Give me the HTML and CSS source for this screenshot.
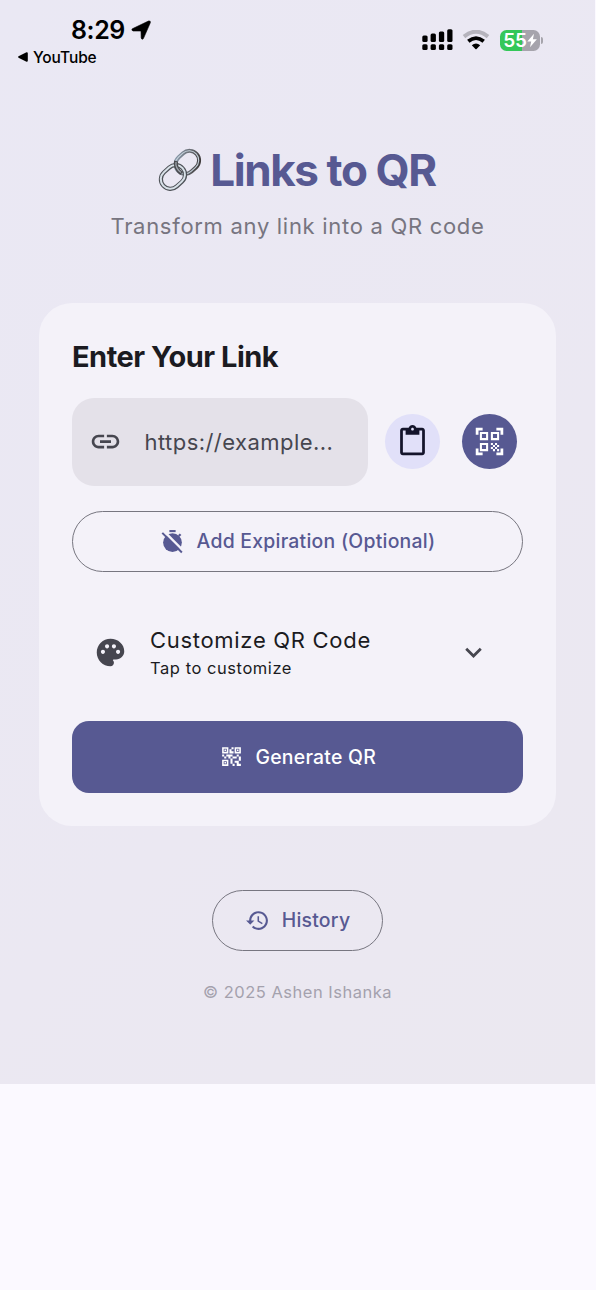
FILE: index.html
```html
<!DOCTYPE html>
<html lang="en">
<head>
<meta charset="UTF-8" />
<title>Links to QR</title>
<link rel="stylesheet" href="styles.css">
</head>
<body>
<div class="screen">

<div class="status">
<div class="status-left">
<div class="clock">8:29
<svg width="20" height="20" viewBox="0 0 20 20"><path d="M1.300 8.800 17.500 1q2.400-.6 1.800 1.800L12.400 18.600q-1.600 1.700-2.200-.6L10 11H2.200q-2.200-.6-.9-2.200z" fill="#000" stroke="#000" stroke-width=".6"/></svg>
</div>
<div class="back"><svg width="10" height="10" viewBox="0 0 10 10"><path d="M.5 4.300 8.500 .2q1.300-.2 1.300 1v7.600q0 1.200-1.300 1L.5 5.700q-.7-.7 0-1.400z" fill="#000"/></svg>YouTube</div>
</div>
<div class="status-right">
<svg class="signal" width="32" height="22" viewBox="0 0 32 22">
<rect x="0.300" y="6.500" width="5.300" height="6.500" rx="1.500"/><rect x="8.600" y="4.500" width="5.300" height="8.500" rx="1.500"/><rect x="16.900" y="2.500" width="5.300" height="10.500" rx="1.500"/><rect x="25.200" y="0.300" width="5.300" height="12.700" rx="1.500"/>
<rect x="0.300" y="15.300" width="5.300" height="5.700" rx="1.500"/><rect x="8.600" y="15.300" width="5.300" height="5.700" rx="1.500"/><rect x="16.900" y="15.300" width="5.300" height="5.700" rx="1.500"/><rect x="25.200" y="15.300" width="5.300" height="5.700" rx="1.500"/>
</svg>
<svg class="wifi" width="28" height="20" viewBox="0 0 28 20">
<path class="line" d="M2 6.600Q14-3.200 26 6.600" stroke="#b5b3bc" stroke-width="4"/>
<path class="line" d="M6.300 11.200Q14 5 21.700 11.200" stroke="#000" stroke-width="3.800"/>
<path d="M9.800 15.200Q14 11.700 18.200 15.200L14.600 19q-.6.500-1.200 0z"/>
</svg>
<div class="battery"><span>55</span><svg width="10" height="15" viewBox="0 0 10 14"><path d="M7 .3.300 8H4.200L3 13.700 9.900 5.800H5.900z" fill="#fff"/></svg></div>
<div class="battery-tip"></div>
</div>
</div>

<div class="hero">
<h1>
<svg class="chain" width="46" height="46" viewBox="0 0 46 46">
<defs><linearGradient id="metal" x1="0" y1="0" x2="1" y2="1"><stop offset="0" stop-color="#8ba0b3"/><stop offset=".45" stop-color="#70757d"/><stop offset="1" stop-color="#35302f"/></linearGradient></defs>
<g class="line" transform="rotate(-42 30 15)"><rect x="17.500" y="6" width="25" height="19" rx="9.500" stroke="url(#metal)" stroke-width="4"/><rect x="17.300" y="5.700" width="25" height="19" rx="9.500" stroke="#c5d0da" stroke-width="1.100"/></g>
<g class="line" transform="rotate(-42 16 30)"><rect x="3" y="20.500" width="26" height="19" rx="9.500" stroke="#4e5258" stroke-width="4.200"/><rect x="3" y="20.300" width="26" height="19" rx="9.500" stroke="#d8e1e8" stroke-width="2"/></g>
<g class="line"><path d="M19 14q-1.500 7 5.500 12.500" stroke="#4a4a4e" stroke-width="4"/><path d="M19 15q-1 6 5 10.500" stroke="#9ba3ab" stroke-width="1.300"/></g>
</svg>
<span>Links to QR</span>
</h1>
<p class="subtitle">Transform any link into a QR code</p>
</div>

<div class="card">
<h2>Enter Your Link</h2>
<div class="link-row">
<div class="field">
<svg width="33" height="33" viewBox="0 0 24 24"><path d="M3.9 12c0-1.710 1.390-3.100 3.100-3.100h4V7H7c-2.760 0-5 2.240-5 5s2.240 5 5 5h4v-1.900H7c-1.710 0-3.100-1.390-3.100-3.100zM8 13h8v-2H8v2zm9-6h-4v1.900h4c1.710 0 3.100 1.390 3.100 3.100s-1.390 3.100-3.100 3.100h-4V17h4c2.760 0 5-2.240 5-5s-2.240-5-5-5z"/></svg>
<span>https://example...</span>
</div>
<div class="round paste">
<svg width="33" height="33" viewBox="0 0 24 24"><path d="M19 2h-4.180C14.400.84 13.300 0 12 0c-1.300 0-2.400.84-2.820 2H5c-1.100 0-2 .9-2 2v16c0 1.100.9 2 2 2h14c1.100 0 2-.9 2-2V4c0-1.100-.9-2-2-2zm-7 0c.55 0 1 .45 1 1s-.45 1-1 1-1-.45-1-1 .45-1 1-1zm7 18H5V4h2v3h10V4h2v16z"/></svg>
</div>
<div class="round scan">
<svg width="33" height="33" viewBox="0 0 24 24"><path d="M9.500 6.500v3h-3v-3h3M11 5H5v6h6V5zm-1.500 9.500v3h-3v-3h3M11 13H5v6h6v-6zm6.500-6.500v3h-3v-3h3M19 5h-6v6h6V5zm-6 8h1.500v1.500H13V13zm1.500 1.500H16V16h-1.500v-1.500zM16 13h1.500v1.500H16V13zm-3 3h1.500v1.500H13V16zm1.500 1.500H16V19h-1.500v-1.500zM16 16h1.500v1.500H16V16zm1.500-1.500H19V16h-1.500v-1.500zm0 3H19V19h-1.500v-1.500zM22 7h-2V4h-3V2h5v5zm0 15v-5h-2v3h-3v2h5zM2 22h5v-2H4v-3H2v5zM2 2v5h2V4h3V2H2z"/></svg>
</div>
</div>

<button class="outline expire">
<svg width="25" height="25" viewBox="0 0 24 24"><path d="M9 1h6v2H9z"/><path d="M17.300 6 19 4.300l1.500 1.500L18.800 7.500z"/><circle cx="12" cy="13" r="9"/><path d="M4.300 2.700 22.500 20.900" stroke="#f4f2f9" stroke-width="2.400"/><path d="M2.200 3.700 21 22.500" stroke="#575992" stroke-width="1.900"/></svg>
<span>Add Expiration (Optional)</span>
</button>

<div class="tile">
<svg width="33" height="33" viewBox="0 0 24 24"><path d="M12 2C6.490 2 2 6.490 2 12s4.490 10 10 10c1.380 0 2.500-1.120 2.500-2.500 0-.61-.23-1.200-.64-1.670-.08-.1-.13-.21-.13-.33 0-.28.22-.5.5-.5H16c3.310 0 6-2.690 6-6 0-4.960-4.490-9-10-9zm5.500 11c-.83 0-1.500-.67-1.500-1.500s.67-1.500 1.500-1.500 1.500.67 1.500 1.500-.67 1.500-1.500 1.500zm-3-4c-.83 0-1.500-.67-1.500-1.500S13.670 6 14.500 6s1.500.67 1.500 1.500S15.330 9 14.500 9zM5 11.500c0-.83.67-1.500 1.500-1.500s1.500.67 1.500 1.500S7.330 13 6.500 13 5 12.330 5 11.500zm6-4c0 .83-.67 1.500-1.500 1.500S8 8.330 8 7.500 8.670 6 9.500 6s1.500.67 1.500 1.500z"/></svg>
<div class="tile-text">
<div class="tile-title">Customize QR Code</div>
<div class="tile-sub">Tap to customize</div>
</div>
<svg width="33" height="33" viewBox="0 0 24 24"><path d="M16.590 8.590L12 13.170 7.410 8.590 6 10l6 6 6-6z"/></svg>
</div>

<button class="generate">
<svg width="25" height="25" viewBox="0 0 24 24"><path d="M15 21h-2v-2h2v2zm-2-7h-2v5h2v-5zm8-2h-2v4h2v-4zm-2-2h-2v2h2v-2zM7 12H5v2h2v-2zm-2-2H3v2h2v-2zm7-5h2V3h-2v2zm-7.500-.5v3h3v-3h-3zM9 9H3V3h6v6zm-4.500 7.500v3h3v-3h-3zM9 21H3v-6h6v6zm7.500-16.500v3h3v-3h-3zM21 9h-6V3h6v6zm-2 10v-3h-4v2h2v3h4v-2h-2zm-2-7h-4v2h4v-2zm-4-2H7v2h2v2h2v-2h2v-2zm1-1V7h-2V5h-2v4h4zM6.750 5.250h-1.500v1.500h1.500v-1.500zm0 12h-1.500v1.500h1.500v-1.500zm12-12h-1.500v1.500h1.500v-1.500z"/></svg>
<span>Generate QR</span>
</button>
</div>

<button class="outline history">
<svg width="25" height="25" viewBox="0 0 24 24"><path d="M13 3c-4.970 0-9 4.030-9 9H1l3.890 3.890.07.14L9 12H6c0-3.870 3.130-7 7-7s7 3.130 7 7-3.130 7-7 7c-1.930 0-3.680-.79-4.940-2.060l-1.420 1.420C8.270 19.990 10.510 21 13 21c4.970 0 9-4.030 9-9s-4.030-9-9-9zm-1 5v5l4.280 2.540.72-1.210-3.500-2.080V8H12z"/></svg>
<span>History</span>
</button>
<p class="footer">© 2025 Ashen Ishanka</p>
</div>
</body>
</html>
```

FILE: styles.css
```css
* { box-sizing: border-box; }

body { margin: 0; min-height: 1290px; background: #fbf9ff; font-family: Inter, "Liberation Sans", sans-serif; color: #1b1b21; }

h1, h2, p { margin: 0; }

svg { display: block; flex: none; fill: currentColor; }

.line { fill: none; }

span { white-space: nowrap; }

.screen { width: 595px; height: 1083.5px; background: linear-gradient(135deg, #eae8f4, #ebe8f2 60%, #ebe8f0); display: flex; flex-direction: column; align-items: center; }

/* status bar */
.status { width: 100%; height: 80px; display: flex; justify-content: space-between; color: #000; }

.status-left { padding: 15px 0 0 18px; }

.clock { display: flex; align-items: center; gap: 6px; height: 30px; padding-left: 53px; font-size: 25px; font-weight: 600; letter-spacing: -0.4px; }

.back { display: flex; align-items: center; gap: 5px; height: 24px; font-size: 15.5px; font-weight: 500; letter-spacing: -0.1px; }

.status-right { display: flex; align-items: center; height: 22px; margin: 29px 52px 0 0; }

.wifi { margin: 0 10px 0 8px; }

.battery { width: 40px; height: 21px; border-radius: 6.5px; background: linear-gradient(90deg, #34c759 55%, #a6a4ac 55%); display: flex; align-items: center; justify-content: center; color: #fff; font-size: 19px; font-weight: 600; letter-spacing: -0.2px; }

.battery-tip { width: 2px; height: 7px; margin-left: 1px; border-radius: 0 2px 2px 0; background: #a6a4ac; }

/* title */
.hero { height: 223px; padding-top: 62px; text-align: center; }

h1 { display: flex; align-items: center; justify-content: center; gap: 7px; height: 56px; padding-right: 2px; font-size: 44px; font-weight: 700; letter-spacing: -1.4px; color: #575992; }

.subtitle { margin-top: 12px; height: 33px; line-height: 33px; font-size: 22px; letter-spacing: 0.7px; color: #777580; }

/* card */
.card { width: 517px; height: 523px; padding: 33px; border-radius: 33px; background: #f4f2f9; display: flex; flex-direction: column; }

h2 { height: 41px; line-height: 41px; font-size: 29px; font-weight: 700; letter-spacing: -0.5px; }

.link-row { margin-top: 20.5px; display: flex; align-items: center; }

.field { width: 296px; height: 88.500px; padding-left: 17px; border-radius: 22px; background: #e4e1e9; color: #46464f; display: flex; align-items: center; gap: 22.500px; font-size: 22px; letter-spacing: 0.450px; }

.round { width: 55px; height: 55px; border-radius: 50%; display: flex; align-items: center; justify-content: center; }

.paste { margin-left: 17px; background: #e1e0f9; color: #14142b; }

.scan { margin-left: 22px; background: #575992; color: #fff; }

button { display: flex; align-items: center; justify-content: center; padding: 0; border: none; font-family: inherit; font-size: 19.400px; font-weight: 500; letter-spacing: 0.250px; }

.outline { height: 60.500px; border: 1.400px solid #777680; border-radius: 31px; background: none; color: #575992; gap: 12px; }

.expire { margin-top: 25px; }

.tile { height: 72px; margin-top: 45px; padding: 0 33px 0 22px; display: flex; align-items: center; color: #46464f; }

.tile-text { flex: 1; padding-left: 23px; }

.tile-title { height: 32px; line-height: 32px; font-size: 22px; letter-spacing: 0.7px; color: #1b1b21; }

.tile-sub { height: 25px; line-height: 25px; font-size: 16.500px; letter-spacing: 0.550px; color: #1b1b21; }

.generate { height: 72px; margin-top: 32px; border-radius: 17px; background: #575992; color: #fff; gap: 11.500px; }

.history { width: 171px; margin-top: 64px; }

.footer { margin-top: 29.5px; height: 24px; line-height: 24px; font-size: 16.500px; letter-spacing: 0.5px; color: #a4a1ad; }
```
